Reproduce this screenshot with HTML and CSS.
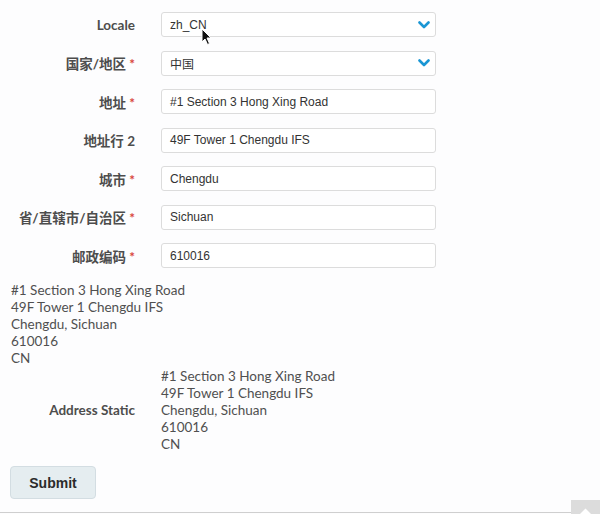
FILE: index.html
```html
<!DOCTYPE html>
<html lang="zh-CN">
<head>
<meta charset="utf-8">
<title>Address form</title>
<link rel="stylesheet" href="styles.css">
</head>
<body>
<div class="page">
  <form class="form">
    <div class="grid">
      <label class="lbl">Locale</label>
      <div class="field select"><span>zh_CN</span><svg class="chev" viewBox="0 0 12 8" width="12" height="8"><path d="M1.5 1.5 L6 6 L10.5 1.5" fill="none" stroke="#1a96d4" stroke-width="2.6" stroke-linecap="round" stroke-linejoin="round"/></svg></div>

      <label class="lbl">国家/地区 <span class="req">*</span></label>
      <div class="field select"><span>中国</span><svg class="chev" viewBox="0 0 12 8" width="12" height="8"><path d="M1.5 1.5 L6 6 L10.5 1.5" fill="none" stroke="#1a96d4" stroke-width="2.6" stroke-linecap="round" stroke-linejoin="round"/></svg></div>

      <label class="lbl">地址 <span class="req">*</span></label>
      <div class="field">#1 Section 3 Hong Xing Road</div>

      <label class="lbl">地址行 2</label>
      <div class="field">49F Tower 1 Chengdu IFS</div>

      <label class="lbl">城市 <span class="req">*</span></label>
      <div class="field">Chengdu</div>

      <label class="lbl">省/直辖市/自治区 <span class="req">*</span></label>
      <div class="field">Sichuan</div>

      <label class="lbl">邮政编码 <span class="req">*</span></label>
      <div class="field">610016</div>
    </div>

    <div class="addr">#1 Section 3 Hong Xing Road<br>49F Tower 1 Chengdu IFS<br>Chengdu, Sichuan<br>610016<br>CN</div>

    <div class="static-row">
      <div class="lbl">Address Static</div>
      <div class="addr">#1 Section 3 Hong Xing Road<br>49F Tower 1 Chengdu IFS<br>Chengdu, Sichuan<br>610016<br>CN</div>
    </div>

    <button type="button" class="btn">Submit</button>
  </form>
  <div class="rule"></div>
  <div class="totop"><svg viewBox="0 0 29 14" width="29" height="14"><path d="M9 14 L14.5 8.5 L20 14 Z" fill="#fff"/></svg></div>
  <svg class="cursor" viewBox="0 0 12 18" width="12" height="18"><path d="M1 1 L1 14 L4 11 L6.5 16.5 L8.5 15.5 L6 10 L10 10 Z" fill="#111" stroke="#fff" stroke-width="1"/></svg>
</div>
</body>
</html>
```

FILE: styles.css
```css
html, body {
  margin: 0;
  padding: 0;
  background: #fdfdfe;
}
.page {
  position: relative;
  width: 600px;
  height: 514px;
  overflow: hidden;
  font-family: "Lato", "Noto Sans CJK SC", sans-serif;
  color: #4a4a4a;
}
.form {
  padding: 12px 0 0 11px;
}
.grid {
  display: grid;
  grid-template-columns: 124px 275px;
  column-gap: 26px;
  row-gap: 13.5px;
  align-items: center;
}
.lbl {
  text-align: right;
  font-size: 13.5px;
  font-weight: 700;
  color: #4d4d4d;
  white-space: nowrap;
}
.req {
  color: #d8453b;
  font-weight: 700;
}
.field {
  box-sizing: border-box;
  height: 25px;
  border: 1px solid #dcdcdc;
  border-radius: 3px;
  background: #fff;
  padding: 0 8px;
  display: flex;
  align-items: center;
  font-family: "Liberation Sans", "Noto Sans CJK SC", sans-serif;
  font-size: 12px;
  color: #333;
}
.select {
  justify-content: space-between;
  padding-right: 5px;
}
.chev {
  display: block;
}
.addr {
  font-size: 13.5px;
  line-height: 17px;
  color: #505050;
}
.form > .addr {
  margin-top: 13.5px;
}
.static-row {
  display: grid;
  grid-template-columns: 124px auto;
  column-gap: 26px;
  align-items: center;
  margin-top: 1px;
}
.btn {
  margin-top: 13.5px;
  margin-left: -1px;
  box-sizing: border-box;
  width: 86px;
  height: 33px;
  border: 1px solid #d3dde2;
  border-radius: 4px;
  background: #e5edf0;
  font-family: "Liberation Sans", sans-serif;
  font-size: 14px;
  font-weight: 700;
  color: #2b2b2b;
  padding: 0;
}
.rule {
  position: absolute;
  left: 0;
  right: 0;
  bottom: 1px;
  height: 1px;
  background: #cfcfcf;
}
.totop {
  position: absolute;
  right: 0;
  bottom: 0;
  width: 29px;
  height: 14px;
  background: #dcdcdc;
}
.totop svg {
  display: block;
}
.cursor {
  position: absolute;
  left: 201px;
  top: 28px;
}
```
